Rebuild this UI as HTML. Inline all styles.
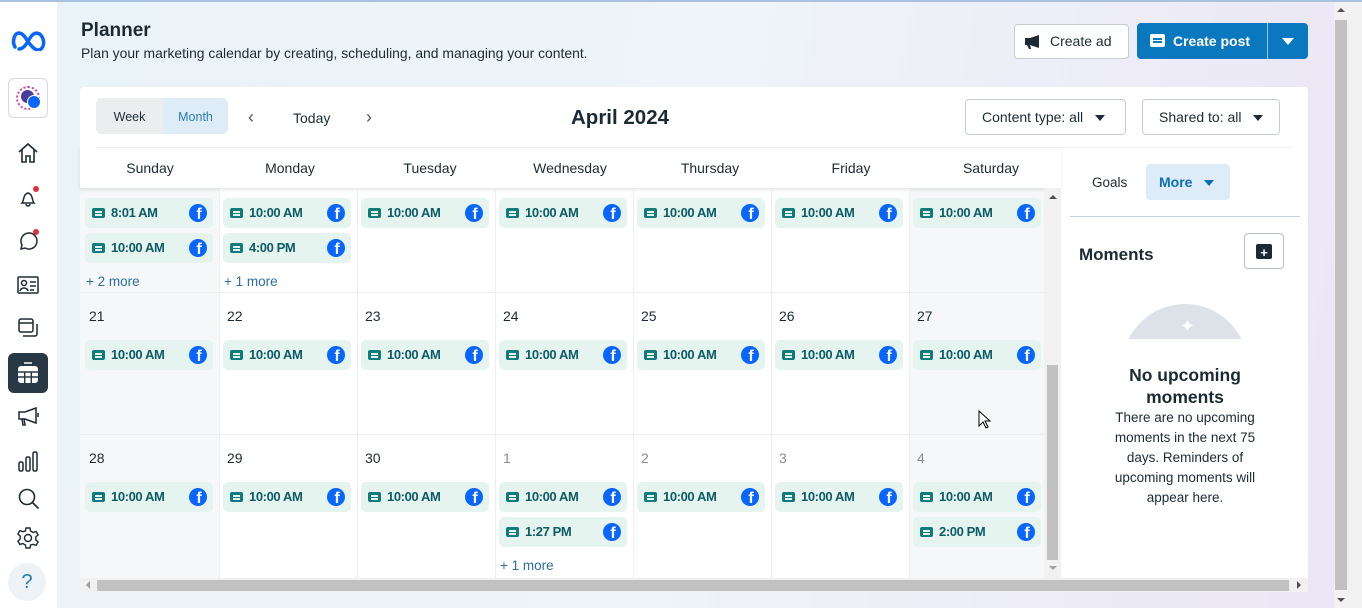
<!DOCTYPE html>
<html><head><meta charset="utf-8"><style>
*{box-sizing:border-box;margin:0;padding:0}
body{width:1362px;height:608px;overflow:hidden;font-family:"Liberation Sans",sans-serif;color:#1c2b33;position:relative;background:#fff}
.a{position:absolute}
#main{left:57px;top:2px;width:1277px;height:606px;background:linear-gradient(100deg,#eaf3f8 0%,#eef4f8 50%,#ece6f6 100%)}
.c{position:absolute;width:128px;height:30px;background:#e6f4ef;border-radius:5px;font-weight:bold;font-size:13px;color:#0c5b66;line-height:30px;padding-left:26px;letter-spacing:-0.4px}
.c i{position:absolute;left:7px;top:10px;width:13px;height:10px;background:#0f7b7b;border-radius:2px}
.c i:before{content:"";position:absolute;left:3px;top:3px;width:7px;height:1.5px;background:#e6f4ef;box-shadow:0 3px 0 #e6f4ef}
.c b{position:absolute;right:6px;top:6px;width:18px;height:18px;border-radius:50%;background:#0866ff;color:#fff;font-size:16px;line-height:22px;text-align:center;font-family:"Liberation Sans",sans-serif;font-weight:bold;overflow:hidden;letter-spacing:0;padding-left:2px}
.d{position:absolute;font-size:14px;color:#1c2b33}
.g{color:#8a8d91}
.m{position:absolute;font-size:13.5px;color:#2d6f9e}
.dh{position:absolute;top:160px;width:140px;text-align:center;font-size:14px}
.vl{position:absolute;width:1px;background:#eceef0}
.hl{position:absolute;height:1px;background:#eceef0;left:80px;width:967px}
.btn{position:absolute;border:1px solid #c6ccd2;border-radius:4px;background:#fff;font-size:14px;line-height:36px}
.tri{display:inline-block;width:0;height:0;border-left:5px solid transparent;border-right:5px solid transparent;border-top:6px solid #1c2b33;vertical-align:middle}
.ic{position:absolute;left:17px}
</style></head><body>
<div class="a" style="left:0;top:0;width:1362px;height:2px;background:#a9c2e0"></div>
<div class="a" style="left:0;top:2px;width:57px;height:606px;background:#fff"></div>
<svg class="a" style="left:11px;top:29px" width="36" height="22" viewBox="0 0 36 22"><path d="M4 18C1 13 3 4 8 4c5 0 8 8 10 10s5 7 9 7c4 0 7-5 5-11S24 1 19 9c-3 5-6 11-11 11" fill="none" stroke="#0866ff" stroke-width="3.5" stroke-linecap="round"/></svg>
<div class="a" style="left:8px;top:78px;width:40px;height:40px;border:1px solid #d5d9dd;border-radius:6px;background:#fff"></div>
<div class="a" style="left:16px;top:86px;width:24px;height:24px;border-radius:50%;border:2px dotted #e0409a;background:#fff"></div>
<div class="a" style="left:21px;top:90px;width:13px;height:13px;border-radius:50%;background:#4a3a9a"></div>
<div class="a" style="left:27px;top:95px;width:14px;height:14px;border-radius:50%;background:#0866ff;border:1.5px solid #fff"></div>
<svg class="ic" style="top:142px" width="22" height="22" viewBox="0 0 22 22" fill="none" stroke="#1c2b33" stroke-width="1.6"><path d="M2 10L11 2l9 8M5 8v12h4v-6h4v6h4V8"/></svg>
<svg class="ic" style="top:186px" width="24" height="24" viewBox="0 0 24 24" fill="none" stroke="#1c2b33" stroke-width="1.5"><path d="M5 17c2-2 1-9 6-10 5 1 4 8 6 10z M9 18a2 2 0 0 0 4 0"/><circle cx="19" cy="3" r="3" fill="#e0303d" stroke="none"/></svg>
<svg class="ic" style="top:229px" width="24" height="24" viewBox="0 0 24 24" fill="none" stroke="#1c2b33" stroke-width="1.5"><path d="M4 20l1-4a8 8 0 1 1 3 3z"/><circle cx="19" cy="3" r="3" fill="#e0303d" stroke="none"/></svg>
<svg class="ic" style="top:276px" width="22" height="18" viewBox="0 0 22 18" fill="none" stroke="#1c2b33" stroke-width="1.5"><rect x="1" y="1" width="20" height="16" rx="1"/><circle cx="7" cy="7" r="2.5"/><path d="M3 15c1-4 7-4 8 0M13 6h6M13 10h6M13 14h4"/></svg>
<svg class="ic" style="top:317px" width="22" height="22" viewBox="0 0 22 22" fill="none" stroke="#1c2b33" stroke-width="1.5"><rect x="2" y="2" width="14" height="13" rx="2"/><path d="M2 6h14M6 19h12a2 2 0 0 0 2-2V7"/></svg>
<div class="a" style="left:8px;top:353px;width:40px;height:40px;border-radius:6px;background:#283845"></div>
<svg class="a" style="left:17px;top:362px" width="22" height="22" viewBox="0 0 22 22"><rect x="1" y="4" width="20" height="17" rx="3" fill="#fff"/><path d="M1 10h20M1 15h20M7.7 10v11M14.3 10v11" stroke="#283845" stroke-width="1.5"/><path d="M7 1h8" stroke="#fff" stroke-width="1.5"/></svg>
<svg class="ic" style="top:406px" width="24" height="22" viewBox="0 0 24 22" fill="none" stroke="#1c2b33" stroke-width="1.5"><path d="M2 6h6l11-4v15L8 13H2zM5 13l1 6h2l-1-6M21 7v4"/></svg>
<svg class="ic" style="top:450px" width="22" height="22" viewBox="0 0 22 22" fill="none" stroke="#1c2b33" stroke-width="1.5"><rect x="2" y="12" width="4" height="9" rx="1.5"/><rect x="9" y="7" width="4" height="14" rx="1.5"/><rect x="16" y="2" width="4" height="19" rx="1.5"/></svg>
<svg class="ic" style="top:487px" width="24" height="24" viewBox="0 0 24 24" fill="none" stroke="#1c2b33" stroke-width="1.6"><circle cx="10" cy="10" r="7.5"/><path d="M15.5 15.5l6 6"/></svg>
<svg class="ic" style="top:527px" width="22" height="22" viewBox="0 0 22 22" fill="none" stroke="#1c2b33" stroke-width="1.4"><circle cx="11" cy="11" r="3.5"/><path d="M9 1h4l.6 3 2.6 1.5 2.9-1 2 3.4-2.3 2v3l2.3 2-2 3.4-2.9-1L13.6 18 13 21H9l-.6-3-2.6-1.5-2.9 1-2-3.4 2.3-2v-3L.9 7l2-3.4 2.9 1L8.4 4z"/></svg>
<div class="a" style="left:8px;top:563px;width:38px;height:38px;border-radius:50%;background:#ecf2f5;color:#2a7da8;font-size:20px;text-align:center;line-height:38px">?</div>
<div id="main" class="a"></div>
<div class="a" style="left:81px;top:20px;font-size:19px;font-weight:bold">Planner</div>
<div class="a" style="left:81px;top:45px;font-size:13.9px">Plan your marketing calendar by creating, scheduling, and managing your content.</div>
<div class="btn" style="left:1014px;top:24px;width:115px;height:35px;line-height:33px;padding-left:35px;color:#1c2b33">Create ad</div>
<svg class="a" style="left:1024px;top:34px" width="20" height="16" viewBox="0 0 20 16"><path d="M1 4h5l9-3v13l-9-3H1zM3 11h3l1 4H5z" fill="#1c2b33"/></svg>
<div class="a" style="left:1137px;top:23px;width:171px;height:36px;background:#0a78be;border-radius:4px"></div>
<div class="a" style="left:1267px;top:23px;width:1px;height:36px;background:#9cc7e4"></div>
<div class="a" style="left:1173px;top:33px;color:#fff;font-size:14px;font-weight:bold">Create post</div>
<div class="a" style="left:1150px;top:34px;width:15px;height:13px;background:#fff;border-radius:2px"></div>
<div class="a" style="left:1153px;top:38px;width:9px;height:1.6px;background:#0a78be;box-shadow:0 3px 0 #0a78be"></div>
<div class="a" style="left:1282px;top:38px;border-left:6px solid transparent;border-right:6px solid transparent;border-top:7px solid #fff"></div>
<div class="a" style="left:80px;top:87px;width:1228px;height:505px;background:#fff;border-radius:4px"></div>
<div class="a" style="left:96px;top:98px;width:67px;height:36px;background:#ebedee;border-radius:6px 0 0 6px;font-size:12.5px;line-height:38px;text-align:center">Week</div>
<div class="a" style="left:163px;top:98px;width:65px;height:36px;background:#deecf7;border-radius:0 6px 6px 0;font-size:12.5px;line-height:38px;text-align:center;color:#2d7db8">Month</div>
<div class="a" style="left:248px;top:107px;font-size:18px;color:#555">‹</div>
<div class="a" style="left:293px;top:110px;font-size:14px">Today</div>
<div class="a" style="left:366px;top:107px;font-size:18px;color:#555">›</div>
<div class="a" style="left:571px;top:106px;font-size:20.5px;font-weight:bold">April 2024</div>
<div class="btn" style="left:965px;top:99px;width:161px;height:36px;line-height:34px;padding-left:16px">Content type: all <span class="tri" style="margin-left:8px"></span></div>
<div class="btn" style="left:1142px;top:99px;width:138px;height:36px;line-height:34px;padding-left:16px">Shared to: all <span class="tri" style="margin-left:8px"></span></div>
<div class="a" style="left:96px;top:147px;width:1196px;height:1px;background:#eceef0"></div>
<div class="a" style="left:80px;top:188px;width:139px;height:390px;background:#f5f7f9"></div>
<div class="a" style="left:910px;top:188px;width:137px;height:390px;background:#f5f7f9"></div>
<div class="a" style="left:80px;top:148px;width:981px;height:40px;background:#fff;box-shadow:0 2px 3px rgba(0,0,0,.1)"></div>
<div class="dh" style="left:80px">Sunday</div><div class="dh" style="left:220px">Monday</div><div class="dh" style="left:360px">Tuesday</div><div class="dh" style="left:500px">Wednesday</div><div class="dh" style="left:640px">Thursday</div><div class="dh" style="left:781px">Friday</div><div class="dh" style="left:921px">Saturday</div>
<div class="vl" style="left:219px;top:188px;height:390px"></div><div class="vl" style="left:357px;top:188px;height:390px"></div><div class="vl" style="left:495px;top:188px;height:390px"></div><div class="vl" style="left:633px;top:188px;height:390px"></div><div class="vl" style="left:771px;top:188px;height:390px"></div><div class="vl" style="left:909px;top:188px;height:390px"></div>
<div class="hl" style="top:292px"></div><div class="hl" style="top:434px"></div>
<div class="c" style="left:85px;top:198px"><i></i>8:01 AM<b>f</b></div>
<div class="c" style="left:85px;top:233px"><i></i>10:00 AM<b>f</b></div>
<div class="m" style="left:86px;top:274px">+ 2 more</div>
<div class="c" style="left:223px;top:198px"><i></i>10:00 AM<b>f</b></div>
<div class="c" style="left:223px;top:233px"><i></i>4:00 PM<b>f</b></div>
<div class="m" style="left:224px;top:274px">+ 1 more</div>
<div class="c" style="left:361px;top:198px"><i></i>10:00 AM<b>f</b></div>
<div class="c" style="left:499px;top:198px"><i></i>10:00 AM<b>f</b></div>
<div class="c" style="left:637px;top:198px"><i></i>10:00 AM<b>f</b></div>
<div class="c" style="left:775px;top:198px"><i></i>10:00 AM<b>f</b></div>
<div class="c" style="left:913px;top:198px"><i></i>10:00 AM<b>f</b></div>
<div class="d" style="left:89px;top:308px">21</div><div class="d" style="left:227px;top:308px">22</div><div class="d" style="left:365px;top:308px">23</div><div class="d" style="left:503px;top:308px">24</div><div class="d" style="left:641px;top:308px">25</div><div class="d" style="left:779px;top:308px">26</div><div class="d" style="left:917px;top:308px">27</div>
<div class="c" style="left:85px;top:340px"><i></i>10:00 AM<b>f</b></div>
<div class="c" style="left:223px;top:340px"><i></i>10:00 AM<b>f</b></div>
<div class="c" style="left:361px;top:340px"><i></i>10:00 AM<b>f</b></div>
<div class="c" style="left:499px;top:340px"><i></i>10:00 AM<b>f</b></div>
<div class="c" style="left:637px;top:340px"><i></i>10:00 AM<b>f</b></div>
<div class="c" style="left:775px;top:340px"><i></i>10:00 AM<b>f</b></div>
<div class="c" style="left:913px;top:340px"><i></i>10:00 AM<b>f</b></div>
<div class="d" style="left:89px;top:450px">28</div><div class="d" style="left:227px;top:450px">29</div><div class="d" style="left:365px;top:450px">30</div><div class="d g" style="left:503px;top:450px">1</div><div class="d g" style="left:641px;top:450px">2</div><div class="d g" style="left:779px;top:450px">3</div><div class="d g" style="left:917px;top:450px">4</div>
<div class="c" style="left:85px;top:482px"><i></i>10:00 AM<b>f</b></div>
<div class="c" style="left:223px;top:482px"><i></i>10:00 AM<b>f</b></div>
<div class="c" style="left:361px;top:482px"><i></i>10:00 AM<b>f</b></div>
<div class="c" style="left:499px;top:482px"><i></i>10:00 AM<b>f</b></div>
<div class="c" style="left:499px;top:517px"><i></i>1:27 PM<b>f</b></div>
<div class="m" style="left:500px;top:558px">+ 1 more</div>
<div class="c" style="left:637px;top:482px"><i></i>10:00 AM<b>f</b></div>
<div class="c" style="left:775px;top:482px"><i></i>10:00 AM<b>f</b></div>
<div class="c" style="left:913px;top:482px"><i></i>10:00 AM<b>f</b></div>
<div class="c" style="left:913px;top:517px"><i></i>2:00 PM<b>f</b></div>
<div class="a" style="left:1044px;top:188px;width:17px;height:390px;background:#f1f1f1"></div>
<div class="a" style="left:1047px;top:365px;width:11px;height:195px;background:#c1c1c1"></div>
<div class="a" style="left:1049px;top:195px;border-left:4px solid transparent;border-right:4px solid transparent;border-bottom:4px solid #505050"></div>
<div class="a" style="left:1049px;top:566px;border-left:4px solid transparent;border-right:4px solid transparent;border-top:4px solid #a0a0a0"></div>
<div class="a" style="left:80px;top:578px;width:1228px;height:14px;background:#f1f1f1"></div>
<div class="a" style="left:97px;top:580px;width:1192px;height:11px;background:#c1c1c1"></div>
<div class="a" style="left:86px;top:581px;border-top:4px solid transparent;border-bottom:4px solid transparent;border-right:4px solid #a0a0a0"></div>
<div class="a" style="left:1297px;top:581px;border-top:4px solid transparent;border-bottom:4px solid transparent;border-left:4px solid #505050"></div>
<div class="a" style="left:1092px;top:175px;font-size:13.5px">Goals</div>
<div class="a" style="left:1146px;top:164px;width:84px;height:36px;background:#deecf7;border-radius:4px;color:#0a6fb5;font-weight:bold;font-size:14px;line-height:36px;padding-left:13px">More <span class="tri" style="border-top-color:#0a6fb5;margin-left:8px"></span></div>
<div class="a" style="left:1070px;top:216px;width:230px;height:1px;background:#cbd2d9"></div>
<div class="a" style="left:1079px;top:245px;font-size:17px;font-weight:bold">Moments</div>
<div class="a" style="left:1244px;top:233px;width:40px;height:36px;border:1px solid #b8c0c8;border-radius:4px"></div>
<div class="a" style="left:1256px;top:244px;width:16px;height:15px;background:#1c2b33;border-radius:2px;color:#fff;font-size:13px;line-height:17px;text-align:center;font-weight:bold">+</div>
<div class="a" style="left:1122px;top:304px;width:126px;height:35px;overflow:hidden"><div style="width:126px;height:126px;border-radius:50%;background:#dde2e8"></div></div>
<div class="a" style="left:1180px;top:316px;color:#fff;font-size:18px">✦</div>
<div class="a" style="left:1110px;top:364px;width:150px;text-align:center;font-size:17.5px;font-weight:bold;line-height:22px">No upcoming moments</div>
<div class="a" style="left:1107px;top:408px;width:156px;text-align:center;font-size:13.5px;line-height:20px">There are no upcoming moments in the next 75 days. Reminders of upcoming moments will appear here.</div>
<svg class="a" style="left:978px;top:410px" width="13" height="20" viewBox="0 0 13 20"><path d="M1 1v15l4-4 3 6 2-1-3-6h5z" fill="#fff" stroke="#000"/></svg>
<div class="a" style="left:1334px;top:2px;width:28px;height:606px;background:#f1f1f1"></div>
<div class="a" style="left:1335px;top:20px;width:12px;height:570px;background:#c1c1c1"></div>
<div class="a" style="left:1337px;top:8px;border-left:4px solid transparent;border-right:4px solid transparent;border-bottom:4px solid #505050"></div>
<div class="a" style="left:1337px;top:598px;border-left:4px solid transparent;border-right:4px solid transparent;border-top:4px solid #505050"></div>
</body></html>
